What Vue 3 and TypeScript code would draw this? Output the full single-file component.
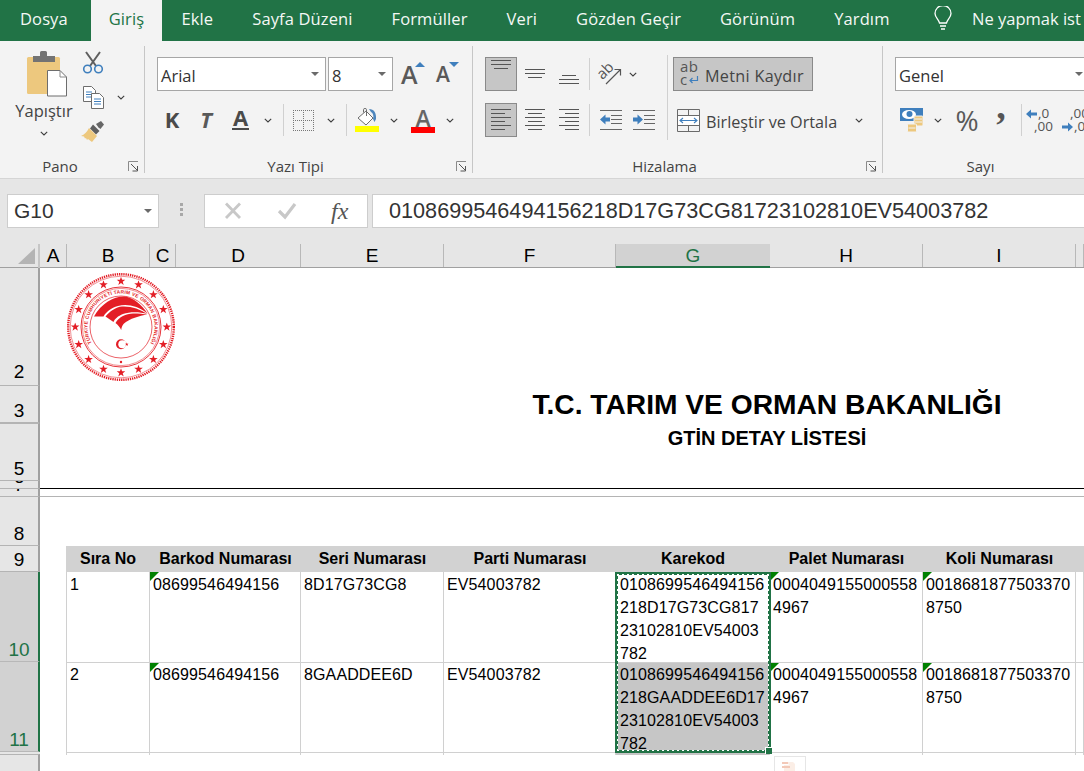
<template>
  <div class="app">
    <svg class="sprite" width="0" height="0">
      <symbol id="chev" viewBox="0 0 8 5"><path d="M.8.8 4 4 7.2.8" fill="none" stroke="#3c3c3c" stroke-width="1.1" /></symbol>
      <symbol id="launch" viewBox="0 0 11 11">
        <path d="M.5 10V.5H10" fill="none" stroke="#8a8a8a" />
        <path d="M3 3l6 6M9.5 5v5h-5" fill="none" stroke="#555" />
      </symbol>
      <symbol id="star" viewBox="-5 -5 10 10">
        <path d="M0-5 1.2-1.6 4.8-1.6 1.9.6 3 4.1 0 2 -3 4.1 -1.9.6 -4.8-1.6 -1.2-1.6Z" fill="#e31e26" />
      </symbol>
    </svg>

    <!-- tabs -->
    <nav class="tabs">
      <div v-for="t in tabs" :key="t" class="tab" :class="{ active: t === 'Giriş' }">{{ t }}</div>
      <svg class="bulb" width="18" height="25" viewBox="0 0 18 25" fill="none" stroke="#fff" stroke-width="1.3">
        <path d="M5.5 17C5 13.5 1 11.5 1 7.5a8 8 0 0 1 16 0c0 4-4 6-4.500 9.500Z" />
        <path d="M6 20h6M7 23h4" />
      </svg>
      <div class="tell">Ne yapmak ist</div>
    </nav>

    <!-- ribbon -->
    <section class="ribbon">
      <div class="group pano">
        <div class="body pano-body">
          <div class="paste">
            <svg width="42" height="47" viewBox="0 0 42 47">
              <rect x="1" y="7" width="33" height="37" rx="1.500" fill="#edc87e" />
              <path d="M7 6h7V2.500Q14 1 15.500 1h4Q21 1 21 2.500V6h8v6H7Z" fill="#737373" />
              <path d="M21.500 20.500H34l6.500 6.500v19h-19Z" fill="#fff" stroke="#6d6d6d" />
              <path d="M34 20.500V27h6.500" fill="none" stroke="#8a8a8a" />
            </svg>
            <span class="paste-label">Yapıştır</span>
            <svg class="chev paste-chev"><use href="#chev" /></svg>
          </div>
          <div class="clip-tools">
            <svg width="22" height="23" viewBox="0 0 22 23" fill="none">
              <path d="M4 1l10 14M18 1 8 15" stroke="#5f5f5f" stroke-width="2" />
              <circle cx="5.500" cy="18" r="3.800" stroke="#3f7fbd" stroke-width="1.600" />
              <circle cx="16.500" cy="18" r="3.800" stroke="#3f7fbd" stroke-width="1.600" />
            </svg>
            <div class="copy-row">
              <svg width="21" height="23" viewBox="0 0 21 23" fill="none" stroke-width="1">
                <path d="M.5.5h8l4 4v11H.5Z" fill="#fff" stroke="#6d6d6d" />
                <path d="M3 6h6M3 8.500h6M3 11h6" stroke="#3f7fbd" />
                <path d="M8.500 7.500h8l4 4v11h-12Z" fill="#fff" stroke="#6d6d6d" />
                <path d="M11 13h7M11 15.500h7M11 18h7" stroke="#3f7fbd" />
              </svg>
              <svg class="chev"><use href="#chev" /></svg>
            </div>
            <svg width="24" height="21" viewBox="0 0 24 21">
              <path d="M15 3l5-3 3 3.500-3.500 4.500-2-1.500Z" fill="#666" />
              <path d="M12 3.500 18.500 10 15 13.500 9 7.500Z" fill="#5f5f5f" />
              <path d="M8 7l8 8-5 6-4-3-1 1-1-2-1 .5-1-2-3-.5Q5 13 8 7Z" fill="#edc87e" />
            </svg>
          </div>
        </div>
        <div class="group-label">Pano<svg class="launch"><use href="#launch" /></svg></div>
      </div>

      <div class="group font">
        <div class="body">
          <div class="font-top">
            <div class="combo font-name"><span>Arial</span><i class="caret"></i></div>
            <div class="combo font-size"><span>8</span><i class="caret"></i></div>
            <span class="grow">A<i class="tri up"></i></span>
            <span class="shrink">A<i class="tri down"></i></span>
          </div>
          <div class="font-tools">
            <span class="letter">K</span>
            <span class="letter ital">T</span>
            <span class="letter under">A</span>
            <svg class="chev"><use href="#chev" /></svg>
            <i class="vsep"></i>
            <svg width="21" height="21" viewBox="0 0 21 21" fill="none" stroke="#777" stroke-dasharray="1 1">
              <path d="M.5 0v21M10.500 0v21M20.500 0v21M0 .5h21M0 10.500h21M0 20.500h21" />
            </svg>
            <svg class="chev"><use href="#chev" /></svg>
            <i class="vsep"></i>
            <div class="color-tool">
              <svg width="24" height="18" viewBox="0 0 24 18" fill="none">
                <path d="M3 10 11 3l7 7-7 7Z" fill="#fff" stroke="#6d6d6d" />
                <path d="M8.500 4.500V1.500Q8.500.5 10 .5t1.500 1V8" stroke="#6d6d6d" />
                <path d="M14 1c5 0 7.500 4 7 10l-1.500 3-1.500-3c1-3 0-6-2-7Z" fill="#4e86bd" />
              </svg>
              <i class="bar yellow"></i>
            </div>
            <svg class="chev"><use href="#chev" /></svg>
            <div class="color-tool text-color">
              <span>A</span>
              <i class="bar red"></i>
            </div>
            <svg class="chev"><use href="#chev" /></svg>
          </div>
        </div>
        <div class="group-label">Yazı Tipi<svg class="launch"><use href="#launch" /></svg></div>
      </div>

      <div class="group align">
        <div class="body align-body">
          <div class="align-left">
            <div class="align-row">
              <span class="tool on"><svg width="20" height="30" viewBox="0 0 20 30"><path d="M0 1.500H20M0 5.500H20M3 9.500H17" stroke="#555" fill="none" /></svg></span>
              <span class="tool"><svg width="20" height="30" viewBox="0 0 20 30"><path d="M0 10.500H20M0 14.500H20M3 18.500H17" stroke="#555" fill="none" /></svg></span>
              <span class="tool"><svg width="20" height="30" viewBox="0 0 20 30"><path d="M3 16.500H17M0 20.500H20M0 24.500H20" stroke="#555" fill="none" /></svg></span>
              <i class="vsep"></i>
              <span class="tool">
                <svg class="free" width="23" height="22" viewBox="0 0 23 22" fill="none">
                  <text x="0" y="13" transform="rotate(-45 7 11)" class="orient-text">ab</text>
                  <path d="M7 21 21 7M15.500 6.500H21.500V12.500" stroke="#555" stroke-width="1.200" />
                </svg>
              </span>
              <svg class="chev"><use href="#chev" /></svg>
            </div>
            <div class="align-row second">
              <span class="tool on"><svg width="20" height="22" viewBox="0 0 20 22"><path d="M0 .5H20M0 4.500H14M0 8.500H20M0 12.500H14M0 16.500H20M0 20.500H14" stroke="#555" fill="none" /></svg></span>
              <span class="tool"><svg width="20" height="22" viewBox="0 0 20 22"><path d="M0 .5H20M3 4.500H17M0 8.500H20M3 12.500H17M0 16.500H20M3 20.500H17" stroke="#555" fill="none" /></svg></span>
              <span class="tool"><svg width="20" height="22" viewBox="0 0 20 22"><path d="M0 .5H20M6 4.500H20M0 8.500H20M6 12.500H20M0 16.500H20M6 20.500H20" stroke="#555" fill="none" /></svg></span>
              <i class="vsep"></i>
              <span class="tool">
                <svg width="22" height="22" viewBox="0 0 22 22" fill="none">
                  <path d="M0 1.500H22M11 6.500H22M11 10.500H22M11 14.500H22M0 20.500H22" stroke="#666" />
                  <path d="M0 10.500 5.500 5.500V8.500H10V12.500H5.500V15.500Z" fill="#3f7fbd" />
                </svg>
              </span>
              <span class="tool">
                <svg width="22" height="22" viewBox="0 0 22 22" fill="none">
                  <path d="M0 1.500H22M11 6.500H22M11 10.500H22M11 14.500H22M0 20.500H22" stroke="#666" />
                  <path d="M10 10.500 4.500 5.500V8.500H0V12.500H4.500V15.500Z" fill="#3f7fbd" />
                </svg>
              </span>
            </div>
          </div>
          <i class="align-divider"></i>
          <div class="align-right">
            <div class="wrap-btn">
              <svg class="free" width="19" height="26" viewBox="0 0 19 26" fill="none">
                <text x="0" y="11" class="wrap-text">ab</text>
                <text x="0" y="24" class="wrap-text">c</text>
                <path d="M17.500 15v4.500H10M12.500 17 10 19.500 12.500 22" stroke="#3f7fbd" stroke-width="1.200" />
              </svg>
              <span>Metni Kaydır</span>
            </div>
            <div class="merge-row">
              <svg width="23" height="23" viewBox="0 0 23 23" fill="none">
                <path d="M.5.5h22v22H.5ZM.5 6.500h22M.5 16.500h22M11.500.5v6M11.500 16.500v6" stroke="#6a6a6a" />
                <rect x="1" y="7" width="21" height="9" fill="#fff" />
                <path d="M3 11.500H20M6 9 3 11.500 6 14M17 9l3 2.500L17 14" stroke="#3f7fbd" stroke-width="1.100" />
              </svg>
              <span>Birleştir ve Ortala</span>
              <svg class="chev"><use href="#chev" /></svg>
            </div>
          </div>
        </div>
        <div class="group-label">Hizalama<svg class="launch"><use href="#launch" /></svg></div>
      </div>

      <div class="group number">
        <div class="body">
          <div class="combo number-format"><span>Genel</span><i class="caret"></i></div>
          <div class="number-tools">
            <svg width="23" height="24" viewBox="0 0 23 24">
              <rect width="23" height="13" fill="#3f7fbd" />
              <ellipse cx="9" cy="6.500" rx="7" ry="4.500" fill="#fff" />
              <circle cx="9.500" cy="6" r="3" fill="#3f7fbd" />
              <rect x="14" y="8" width="9" height="10" rx="1" fill="#edc87e" stroke="#f3f3f3" />
              <path d="M15 11h7M15 14h7" stroke="#f3f3f3" />
              <rect x="7.500" y="16" width="9" height="8" rx="1" fill="#edc87e" stroke="#f3f3f3" />
              <path d="M8.500 20h7" stroke="#f3f3f3" />
            </svg>
            <svg class="chev"><use href="#chev" /></svg>
            <span class="percent">%</span>
            <span class="comma">,</span>
            <i class="vsep"></i>
            <div class="dec">
              <span class="dec-line"><svg width="11" height="10" viewBox="0 0 11 10"><path d="M0 5 5 .5V3.500H11V6.500H5V9.500Z" fill="#3f7fbd" /></svg>,0</span>
              <span class="dec-line end">,00</span>
            </div>
            <div class="dec">
              <span class="dec-line end">,00</span>
              <span class="dec-line"><svg width="11" height="10" viewBox="0 0 11 10"><path d="M11 5 6 .5V3.500H0V6.500H6V9.500Z" fill="#3f7fbd" /></svg>,0</span>
            </div>
          </div>
        </div>
        <div class="group-label">Sayı</div>
      </div>
    </section>

    <!-- formula bar -->
    <section class="formula-bar">
      <div class="name-box">G10<i class="caret"></i></div>
      <div class="grip"><i></i><i></i><i></i></div>
      <div class="fx-box">
        <svg width="20" height="18" viewBox="0 0 20 18"><path d="M3 1.500 17 16M17 1.500 3 16" stroke="#c8c8c8" stroke-width="2.800" /></svg>
        <svg width="20" height="18" viewBox="0 0 20 18" fill="none"><path d="M2 9l6 6L18 2" stroke="#c8c8c8" stroke-width="3.200" /></svg>
        <span class="fx">fx</span>
      </div>
      <div class="formula-input">{{ formula }}</div>
    </section>

    <!-- column letters -->
    <div class="col-head">
      <div class="corner"><svg width="17" height="16" viewBox="0 0 17 16"><path d="M17 0V16H0Z" fill="#b4b4b4" /></svg></div>
      <div v-for="c in columns" :key="c" class="col-letter" :class="{ picked: c === 'G' }">{{ c }}</div>
    </div>

    <div class="sheet">
      <div class="row-heads">
        <div v-for="r in rowHeads" :key="r.cls + r.label" class="row-num" :class="[r.cls, { picked: r.picked }]">{{ r.label }}</div>
      </div>

      <div class="cells">
        <svg class="logo" width="110" height="110" viewBox="-55 -55 110 110">
          <defs>
            <path id="seal-arc" d="M-23.700 23.700A33.500 33.500 0 1 1 23.700 23.700" />
          </defs>
          <circle r="52.800" fill="none" stroke="#e31e26" stroke-width="2.400" stroke-dasharray="1.300 .9" />
          <circle r="50.800" fill="none" stroke="#e31e26" stroke-width=".5" />
          <circle r="40" fill="none" stroke="#e31e26" stroke-width=".9" />
          <circle r="38.600" fill="none" stroke="#e31e26" stroke-width=".5" />
          <circle r="31" fill="none" stroke="#e31e26" stroke-width=".7" />
          <use v-for="s in logoStars" :key="s.a" href="#star" :x="s.x - 4.500" :y="s.y - 4.500" width="9" height="9" />
          <text class="seal-text"><textPath href="#seal-arc" startOffset="50%" text-anchor="middle">TÜRKİYE CUMHURİYETİ TARIM VE ORMAN BAKANLIĞI</textPath></text>
          <circle cy="35" r="1.200" fill="#e31e26" />
          <path d="M-27-10.500C-20-23-8-30.500 3-30.500 12-30 21-22 26.500-13.500 17-21 6-23.500-3-21-10-19-15-15-17.500-10.500Z" fill="#e31e26" />
          <path d="M-15.500-10.500C-11-16-5-20 1-20.500 10-21 19-18 26.500-13 18-15.500 9-15.500 2-13-3-11-6.500-8-7.500-5Z" fill="#e31e26" />
          <path d="M-5.500-4C-2-10 5-13.500 12-13.500 18-13.500 23-13 26.500-12.500 18-11 9-8.500 3-3.500 1.500-2 .5 0 .2 3-1 0-3-2-5.500-4Z" fill="#e31e26" />
          <circle cx="0" cy="17.300" r="5" fill="#e31e26" />
          <circle cx="1.300" cy="17.300" r="4" fill="#fff" />
          <use href="#star" x="3.800" y="15.300" width="4" height="4" />
        </svg>

        <div class="r2"></div>
        <div class="title-row"><h1>T.C. TARIM VE ORMAN BAKANLIĞI</h1></div>
        <div class="hidden-row"></div>
        <div class="sub-row"><h2>GTİN DETAY LİSTESİ</h2></div>
        <div class="r6"></div>
        <div class="r7"></div>
        <div class="r8"></div>

        <div class="table">
          <div class="thead">
            <div v-for="h in headers" :key="h">{{ h }}</div>
            <div></div>
          </div>
          <div class="tbody">
            <div v-for="(row, i) in rows" :key="row.no" class="trow">
              <div class="td">{{ row.no }}</div>
              <div class="td flag">{{ row.barcode }}</div>
              <div class="td">{{ row.serial }}</div>
              <div class="td">{{ row.lot }}</div>
              <div class="td code" :class="{ shaded: i === 1 }">{{ row.code }}</div>
              <div class="td flag">{{ row.pallet }}</div>
              <div class="td flag">{{ row.box }}</div>
              <div class="td"></div>
            </div>
            <div class="ants"><i class="handle"></i></div>
          </div>
        </div>
        <div class="paste-hint">
          <svg width="22" height="15" viewBox="0 0 22 15" fill="none">
            <path d="M5 15V6h5L8 3h6l2 2v10" fill="#fbeee6" />
            <path d="M3 8h8M3 4h6" stroke="#f3c9b8" stroke-width="2" />
          </svg>
        </div>
      </div>
    </div>
  </div>
</template>

<script setup lang="ts">
interface RowHead {
  label: string
  cls: string
  picked?: boolean
}

interface DataRow {
  no: string
  barcode: string
  serial: string
  lot: string
  code: string
  pallet: string
  box: string
}

const tabs = ['Dosya', 'Giriş', 'Ekle', 'Sayfa Düzeni', 'Formüller', 'Veri', 'Gözden Geçir', 'Görünüm', 'Yardım']
const formula = '010869954649415621' + '8D17G73CG81723102810EV54003782'
const columns = ['A', 'B', 'C', 'D', 'E', 'F', 'G', 'H', 'I', '']

const rowHeads: RowHead[] = [
  { label: '2', cls: 'h2' },
  { label: '3', cls: 'h3' },
  { label: '5', cls: 'h5' },
  { label: '6', cls: 'h6' },
  { label: '7', cls: 'h7' },
  { label: '8', cls: 'h8' },
  { label: '9', cls: 'h9' },
  { label: '10', cls: 'h10', picked: true },
  { label: '11', cls: 'h10', picked: true },
  { label: '', cls: 'h12' },
]

const headers = ['Sıra No', 'Barkod Numarası', 'Seri Numarası', 'Parti Numarası', 'Karekod', 'Palet Numarası', 'Koli Numarası']

const rows: DataRow[] = [
  {
    no: '1',
    barcode: '08699546494156',
    serial: '8D17G73CG8',
    lot: 'EV54003782',
    code: '0108699546494156\n218D17G73CG817\n23102810EV54003\n782',
    pallet: '0004049155000558\n4967',
    box: '0018681877503370\n8750',
  },
  {
    no: '2',
    barcode: '08699546494156',
    serial: '8GAADDEE6D',
    lot: 'EV54003782',
    code: '0108699546494156\n218GAADDEE6D17\n23102810EV54003\n782',
    pallet: '0004049155000558\n4967',
    box: '0018681877503370\n8750',
  },
]

// 16 stars round the seal
const logoStars = Array.from({ length: 16 }, (_, i) => {
  const a = (i * Math.PI * 2) / 16
  return { a: i, x: Math.sin(a) * 45.8, y: -Math.cos(a) * 45.8 }
})
</script>

<style>
html,
body {
  margin: 0;
  overflow: hidden;
  background: #fff;
}
</style>

<style scoped>
.app {
  width: 1084px;
  height: 771px;
  overflow: hidden;
  display: flex;
  flex-direction: column;
  font-family: "Open Sans", "Liberation Sans", sans-serif;
  color: #444;
}

.sprite {
  position: absolute;
}

.free {
  overflow: visible;
}

.chev {
  width: 8px;
  height: 5px;
  display: block;
  flex: none;
}

i {
  font-style: normal;
}

/* Tabs */
.tabs {
  height: 41px;
  flex: none;
  background: #217346;
  display: flex;
  white-space: nowrap;
}

.tab {
  flex: none;
  padding: 0 19.5px;
  font-size: 16.5px;
  letter-spacing: .12px;
  line-height: 37px;
  color: #f4f8f5;
}

.tab:first-child {
  width: 91px;
  box-sizing: border-box;
  padding: 0 0 0 20px;
}

.tab.active {
  background: #f3f3f3;
  color: #217346;
  width: 71px;
  box-sizing: border-box;
  padding: 0;
  text-align: center;
}

.bulb {
  margin: 6px 0 0 25px;
  flex: none;
}

.tell {
  flex: none;
  margin-left: 20px;
  font-size: 16.5px;
  line-height: 37px;
  color: #f4f8f5;
}

/* Ribbon */
.ribbon {
  height: 138px;
  flex: none;
  box-sizing: border-box;
  background: #f3f3f3;
  border-bottom: 1px solid #d5d5d5;
  display: flex;
}

.group {
  margin-top: 5px;
  height: 127px;
  box-sizing: border-box;
  border-right: 1px solid #c6c6c6;
  display: flex;
  flex-direction: column;
  flex: none;
}

.pano {
  width: 145px;
}

.font {
  width: 328px;
}

.align {
  width: 410px;
}

.number {
  flex: 1;
  border-right: 0;
  min-width: 0;
}

.body {
  flex: 1;
  min-height: 0;
  padding: 11px 0 0 12px;
}

.group-label {
  position: relative;
  height: 22px;
  line-height: 30px;
  text-align: center;
  font-size: 15px;
  color: #444;
  padding-right: 26px;
}

.pano .group-label {
  padding-right: 24px;
}

.number .group-label {
  padding-right: 6px;
}

.launch {
  position: absolute;
  right: 5px;
  top: 10px;
  width: 11px;
  height: 11px;
}

.caret {
  width: 0;
  height: 0;
  border-left: 4px solid transparent;
  border-right: 4px solid transparent;
  border-top: 4px solid #6a6a6a;
  flex: none;
}

.vsep {
  width: 1px;
  height: 32px;
  background: #d0d0d0;
  display: block;
  justify-self: center;
}

.combo {
  box-sizing: border-box;
  height: 34px;
  background: #fff;
  border: 1px solid #a6a6a6;
  display: flex;
  align-items: center;
  justify-content: space-between;
  padding: 0 6px 0 3px;
  font-size: 16.5px;
  color: #333;
}

.combo span {
  padding-top: 2px;
}

/* Clipboard group */
.pano-body {
  display: flex;
  padding: 0;
}

.paste {
  width: 88px;
  display: flex;
  flex-direction: column;
  align-items: center;
  padding-top: 4px;
}

.paste svg:first-child {
  margin-left: 6px;
}

.paste-label {
  margin-top: 3px;
  font-size: 16.5px;
  line-height: 22px;
  color: #444;
}

.paste-chev {
  margin-top: 9px;
}

.clip-tools {
  margin: 5px 0 0 -7px;
  display: flex;
  flex-direction: column;
  align-items: flex-start;
  gap: 12px;
}

.clip-tools > svg:first-child {
  margin-left: 1px;
}

.copy-row {
  display: flex;
  align-items: center;
  gap: 13px;
  margin-left: 2px;
}

/* Font group */
.font-top {
  display: flex;
  align-items: center;
}

.font-name {
  width: 169px;
}

.font-size {
  width: 65px;
  margin-left: 2px;
}

.grow,
.shrink {
  position: relative;
  font-weight: 600;
  color: #595959;
  line-height: 1;
}

.grow {
  font-size: 25px;
  margin-left: 8px;
  width: 35px;
}

.shrink {
  font-size: 21px;
  width: 25px;
}

.tri {
  position: absolute;
  width: 0;
  height: 0;
  border-left: 5px solid transparent;
  border-right: 5px solid transparent;
}

.tri.up {
  left: 14px;
  top: 0;
  border-bottom: 5px solid #3f7fbd;
}

.tri.down {
  left: 13px;
  top: -2px;
  border-top: 5px solid #3f7fbd;
}

.font-tools {
  margin: 12px 0 0 -2px;
  height: 34px;
  display: grid;
  grid-template-columns: 34px 34px 35px 20px 10px 30px 26px 4px 38px 16px 42px 12px;
  justify-items: center;
  align-items: center;
}

.letter {
  font-size: 22px;
  font-weight: 700;
  color: #4a4a4a;
  line-height: 26px;
  margin-bottom: 3px;
}

.letter.ital {
  font-style: italic;
  color: #595959;
}

.letter.under {
  border-bottom: 2px solid #4a4a4a;
  line-height: 21px;
  padding: 0 1px;
}

.color-tool {
  width: 24px;
  display: flex;
  flex-direction: column;
}

.bar {
  height: 6px;
  display: block;
}

.bar.yellow {
  background: #ffff00;
}

.bar.red {
  background: #ff0000;
}

.text-color span {
  font-size: 23px;
  font-weight: 600;
  line-height: 20px;
  height: 19px;
  text-align: center;
  color: #666;
}

/* Alignment group */
.align-body {
  display: flex;
  align-items: flex-start;
}

.align-left {
  width: 182px;
  flex: none;
}

.align-row {
  display: grid;
  grid-template-columns: 32px 36px 32px 8px 35px 10px;
  justify-items: center;
  align-items: center;
  height: 34px;
}

.align-row.second {
  grid-template-columns: 32px 36px 32px 8px 35px 32px;
  margin-top: 12px;
}

.tool {
  width: 100%;
  height: 34px;
  display: flex;
  align-items: center;
  justify-content: center;
  box-sizing: border-box;
}

.tool.on {
  background: #c6c6c6;
  border: 1px solid #8a8a8a;
}

.orient-text {
  font-family: "Open Sans", sans-serif;
  font-size: 15px;
  fill: #555;
}

.align-divider {
  width: 1px;
  height: 85px;
  background: #d0d0d0;
  display: block;
  margin-top: -2px;
  flex: none;
}

.align-right {
  margin-left: 5px;
  font-size: 16.2px;
  color: #444;
  white-space: nowrap;
}

.align-right span {
  padding-top: 3px;
}

.wrap-btn {
  width: 140px;
  height: 34px;
  box-sizing: border-box;
  background: #c6c6c6;
  border: 1px solid #8a8a8a;
  display: flex;
  align-items: center;
  padding-left: 6px;
  gap: 6px;
  letter-spacing: .3px;
}

.wrap-text {
  font-family: "Open Sans", sans-serif;
  font-size: 15px;
  fill: #555;
}

.merge-row {
  margin-top: 12px;
  height: 34px;
  display: flex;
  align-items: center;
  padding-left: 4px;
  gap: 6px;
}

.merge-row .chev {
  margin-left: 12px;
}

/* Number group */
.number-format {
  width: 195px;
}

.number-tools {
  margin-top: 12px;
  height: 34px;
  display: grid;
  grid-template-columns: 32px 22px 36px 32px 8px 36px 36px;
  grid-template-rows: 34px;
  justify-items: center;
  align-items: center;
}

.percent {
  font-size: 28px;
  color: #595959;
}

.comma {
  font-family: "Liberation Serif", serif;
  font-weight: 700;
  font-size: 38px;
  line-height: 20px;
  height: 30px;
  color: #555;
  margin-bottom: 18px;
}

.dec {
  display: flex;
  flex-direction: column;
  font-size: 13.5px;
  line-height: 13px;
  color: #555;
  width: 34px;
  white-space: nowrap;
}

.dec-line {
  display: flex;
  align-items: center;
  gap: 1px;
}

.dec-line.end {
  padding-left: 8px;
}

/* Formula bar */
.formula-bar {
  height: 65px;
  flex: none;
  box-sizing: border-box;
  background: #e6e6e6;
  padding-top: 15px;
  display: flex;
  align-items: flex-start;
  padding-left: 7px;
  font-family: "Liberation Sans", sans-serif;
  font-size: 21px;
  color: #333;
}

.name-box,
.fx-box,
.formula-input {
  height: 34px;
  box-sizing: border-box;
  background: #fff;
  border: 1px solid #cdcdcd;
}

.name-box {
  width: 152px;
  display: flex;
  align-items: center;
  justify-content: space-between;
  padding: 0 6px 0 6px;
}

.grip {
  width: 45px;
  display: flex;
  flex-direction: column;
  align-items: center;
  gap: 2px;
  padding-top: 9px;
}

.grip i {
  width: 3px;
  height: 3px;
  background: #a8a8a8;
  display: block;
}

.fx-box {
  width: 164px;
  display: flex;
  align-items: center;
  padding-left: 18px;
  gap: 34px;
}

.fx {
  font-family: "Liberation Serif", serif;
  font-style: italic;
  font-size: 24px;
  color: #555;
}

.formula-input {
  flex: 1;
  margin-left: 4px;
  border-right: 0;
  padding-left: 16px;
  font-size: 21.65px;
  line-height: 32px;
  white-space: nowrap;
}

/* Column letters */
.col-head {
  height: 24px;
  flex: none;
  box-sizing: border-box;
  background: #e6e6e6;
  display: grid;
  grid-template-columns: 40px 27px 83px 26px 125px 143px 172px 154px 153px 153px 8px;
  border-bottom: 1px solid #a0a0a0;
  font-family: "Liberation Sans", sans-serif;
  font-size: 19px;
  color: #000;
}

.corner {
  display: flex;
  align-items: flex-start;
  justify-content: flex-end;
  padding: 4px 3px 0 0;
  box-sizing: border-box;
  border-right: 2px solid #c6c6c6;
}

.col-letter {
  text-align: center;
  line-height: 24px;
  border-right: 1px solid #b8b8b8;
  height: 23px;
  overflow: hidden;
}

.col-letter.picked {
  background: #d2d2d2;
  color: #217346;
  height: 24px;
  box-sizing: border-box;
  border-bottom: 2px solid #217346;
  border-right: 0;
}

/* Sheet */
.sheet {
  flex: 1;
  min-height: 0;
  display: flex;
  background: #fff;
}

.row-heads {
  width: 40px;
  flex: none;
  background: #e6e6e6;
  font-family: "Liberation Sans", sans-serif;
  font-size: 19px;
  color: #000;
}

.row-num {
  box-sizing: border-box;
  border-right: 2px solid #a0a0a0;
  border-bottom: 1px solid #b4b4b4;
  display: flex;
  align-items: flex-end;
  justify-content: center;
  line-height: 22px;
  overflow: hidden;
}

.row-num.picked {
  background: #d2d2d2;
  color: #217346;
  border-right-color: #217346;
  border-bottom-color: #b8b8b8;
}

.h2 { height: 118px; padding-bottom: 2px; }
.h3 { height: 37px; }
.h5 { height: 58px; border-top: 1px solid #b4b4b4; padding-top: 3px; }
.h6 { height: 8px; }
.h7 { height: 8px; }
.h8 { height: 49px; }
.h9 { height: 26px; }
.h10 { height: 90px; }
.h12 { flex: 1; height: 40px; border-bottom: 0; border-top: 1px solid #b4b4b4; margin-top: 2px; }

.cells {
  position: relative;
  flex: 1;
  min-width: 0;
  font-family: "Liberation Sans", sans-serif;
  color: #000;
}

.logo {
  position: absolute;
  left: 26px;
  top: 4px;
}

.seal-text {
  font-family: "Liberation Sans", sans-serif;
  font-size: 4.9px;
  font-weight: 700;
  letter-spacing: .2px;
  fill: #e31e26;
}

.r2 {
  height: 118px;
}

.title-row {
  height: 37px;
  margin-left: 404px;
  width: 646px;
  text-align: center;
}

h1 {
  margin: 0;
  font-size: 28.2px;
  font-weight: 700;
  line-height: 37px;
  white-space: nowrap;
}

.hidden-row {
  height: 4px;
}

.sub-row {
  height: 54px;
  margin-left: 404px;
  width: 646px;
  text-align: center;
}

h2 {
  margin: 0;
  font-size: 20px;
  font-weight: 700;
  line-height: 22px;
}

.r6 {
  height: 7px;
  border-bottom: 1px solid #000;
}

.r7 {
  height: 7px;
  border-bottom: 1px solid #b4b4b4;
}

.r8 {
  height: 49px;
}

.table {
  margin-left: 26px;
  font-size: 16px;
  letter-spacing: .12px;
}

.thead,
.trow {
  display: grid;
  grid-template-columns: 84px 151px 143px 172px 154px 153px 153px 1fr;
}

.thead {
  height: 26px;
  background: #d2d2d2;
  font-size: 16px;
  font-weight: 700;
  line-height: 26px;
  text-align: center;
  letter-spacing: 0;
}

.tbody {
  position: relative;
}

.trow {
  height: 90px;
  border-bottom: 1px solid #d0d0d0;
  box-sizing: border-box;
}

.trow:first-child {
  height: 91px;
}

.td {
  position: relative;
  padding: 1px 0 0 3px;
  line-height: 23px;
  white-space: pre;
  border-right: 1px solid #d0d0d0;
  overflow: hidden;
}

.trow + .trow .td {
  padding-top: 0;
}

.td:first-child {
  border-left: 1px solid #d0d0d0;
}

.td.code {
  overflow: visible;
  padding-left: 4px;
}

.td.shaded {
  background: #c6c6c6;
}

.td.flag::before {
  content: "";
  position: absolute;
  left: 0;
  top: 0;
  border-top: 9px solid #008000;
  border-right: 9px solid transparent;
}

.ants {
  position: absolute;
  left: 549px;
  top: 0;
  width: 156px;
  height: 181px;
  box-sizing: border-box;
  border: 3px solid #217346;
  pointer-events: none;
}

.ants::after {
  content: "";
  position: absolute;
  inset: -1px;
  background:
    repeating-linear-gradient(90deg, #fff 0 2px, transparent 2px 5px) top / 100% 1px no-repeat,
    repeating-linear-gradient(90deg, #fff 0 2px, transparent 2px 5px) bottom / 100% 1px no-repeat,
    repeating-linear-gradient(0deg, #fff 0 2px, transparent 2px 5px) left / 1px 100% no-repeat,
    repeating-linear-gradient(0deg, #fff 0 2px, transparent 2px 5px) right / 1px 100% no-repeat;
}

.handle {
  position: absolute;
  right: -4px;
  bottom: -4px;
  z-index: 1;
  width: 7px;
  height: 7px;
  box-sizing: border-box;
  background: #217346;
  border-left: 1px solid #fff;
  border-top: 1px solid #fff;
}

.paste-hint {
  position: absolute;
  left: 734px;
  top: 488px;
  width: 32px;
  height: 20px;
  box-sizing: border-box;
  border: 1px solid #e6e6e6;
  display: flex;
  justify-content: center;
  padding-top: 2px;
}
</style>
